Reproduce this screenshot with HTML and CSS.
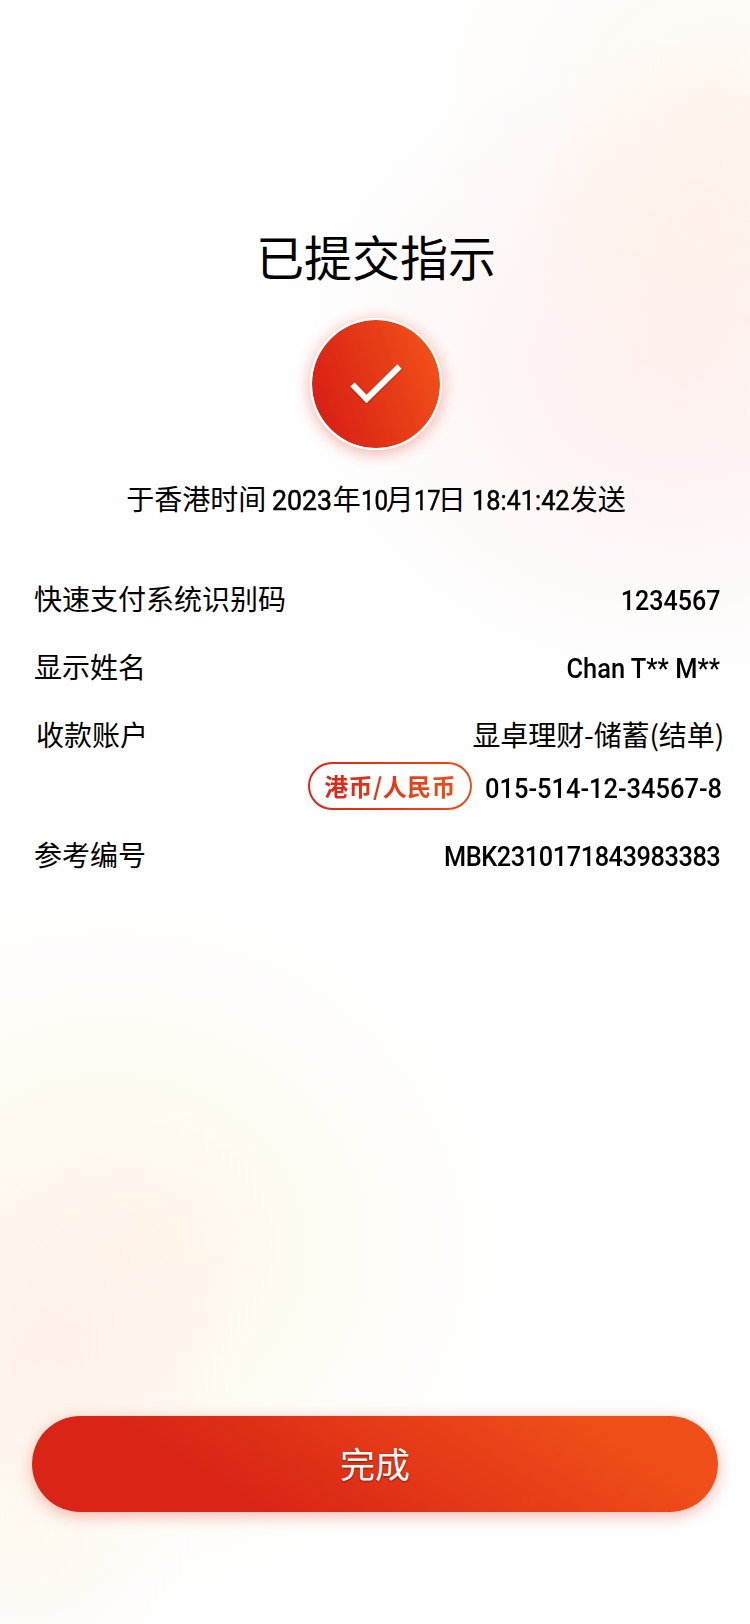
FILE: index.html
```html
<!DOCTYPE html>
<html lang="zh-CN">
<head>
<meta charset="utf-8">
<title>已提交指示</title>
<link rel="stylesheet" href="styles.css">
</head>
<body>
<main class="page">
  <h1 class="title">已提交指示</h1>
  <div class="badge">
    <svg class="check" viewBox="0 0 52 40" width="52" height="40"><path d="M2.5 20.5 16.5 35 49.5 2.5" fill="none" stroke="#fff" stroke-width="6"/></svg>
  </div>
  <p class="sent">于香港时间<span class="num year">2023</span>年<span class="num month">10</span>月<span class="num day">17</span>日<span class="num time">18:41:42</span>发送</p>
  <dl class="details">
    <div class="row"><dt>快速支付系统识别码</dt><dd class="num id">1234567</dd></div>
    <div class="row"><dt>显示姓名</dt><dd class="num name">Chan T** M**</dd></div>
    <div class="row account">
      <dt>收款账户</dt>
      <dd class="account-name">显卓理财-储蓄(结单)</dd>
    </div>
    <div class="row account-line">
      <dd class="pill"><span class="pill-text">港币/人民币</span></dd>
      <dd class="num number">015-514-12-34567-8</dd>
    </div>
    <div class="row"><dt>参考编号</dt><dd class="num ref">MBK2310171843983383</dd></div>
  </dl>
  <button class="done">完成</button>
</main>
</body>
</html>
```
FILE: styles.css
```css
* { box-sizing: border-box; }
body {
  margin: 0;
  font-family: "Noto Sans CJK SC", sans-serif;
  font-size: 28px;
  color: #000;
}
.page {
  height: 1624px;
  display: flex;
  flex-direction: column;
  align-items: center;
  overflow: hidden;
  background:
    radial-gradient(ellipse 170px 170px at 700px 220px, rgba(255, 238, 228, .6), rgba(255, 238, 228, 0)),
    radial-gradient(ellipse 380px 320px at 680px 360px, rgba(254, 238, 236, .9), rgba(254, 241, 239, .6) 50%, rgba(255, 246, 244, 0)),
    radial-gradient(ellipse 300px 260px at 720px 100px, rgba(255, 249, 242, 1), rgba(255, 251, 246, 0)),
    radial-gradient(ellipse 190px 200px at 50px 1340px, rgba(255, 239, 232, .9), rgba(255, 242, 234, 0)),
    radial-gradient(ellipse 150px 130px at 150px 1240px, rgba(255, 244, 234, .8), rgba(255, 246, 236, 0)),
    radial-gradient(ellipse 400px 360px at 110px 1250px, rgba(255, 250, 238, 1), rgba(255, 251, 241, .8) 50%, rgba(255, 253, 248, 0)),
    radial-gradient(ellipse 160px 160px at 30px 1530px, rgba(255, 247, 236, .8), rgba(255, 250, 240, 0)),
    #fefefe;
}
.title {
  margin: 219px 0 0 2px;
  font-size: 48px;
  line-height: 72px;
  font-weight: 400;
}
.badge {
  flex: none;
  width: 132px;
  height: 132px;
  margin: 27px 0 0 2px;
  border: 2px solid #fff;
  border-radius: 50%;
  background: linear-gradient(70deg, #d92015 12%, #f04e19 88%) padding-box;
  box-shadow: 0 3px 16px rgba(226, 50, 30, .38);
  display: grid;
  place-items: center;
}
.check { filter: drop-shadow(0 1px 1px rgba(100, 10, 0, .4)); }
.sent { margin: 28px 0 0 2px; line-height: 40px; white-space: nowrap; }
.num {
  font-family: Roboto, "Noto Sans CJK SC", sans-serif;
  font-weight: 500;
  font-size: 27.5px;
  white-space: nowrap;
}
.sent .num {
  display: inline-block;
  font-weight: 400;
  -webkit-text-stroke: .5px #000;
  transform-origin: 0 50%;
}
.year { width: 60.5px; margin-left: 6px; transform: scaleX(.97); }
.month { width: 25px; transform: scaleX(.88); }
.day { width: 24px; transform: scaleX(.86); }
.time { width: 98px; margin-left: 6px; transform: scaleX(.92); }
.details { width: 100%; margin: 46px 0 0; padding: 0 30px 0 34px; }
.row { height: 68px; display: flex; justify-content: space-between; line-height: 68px; }
dt { margin-top: -3px; }
dd { margin: 0; }
.row .num { transform-origin: 100% 50%; }
.id { transform: scaleX(.91); }
.name { transform: scaleX(.925); }
.account { height: 60px; padding-left: 2px; }
.account-name { margin: -3px -4px 0 0; letter-spacing: -.1px; }
.account-line { height: 60px; line-height: 48px; align-items: flex-start; justify-content: flex-end; gap: 12px; }
.pill {
  width: 164px;
  height: 48px;
  margin-top: -1px;
  border: 2px solid transparent;
  border-radius: 24px;
  background: linear-gradient(#fff, #fff) padding-box, linear-gradient(90deg, #db2416, #f04c19) border-box;
  text-align: center;
  font-size: 24px;
  line-height: 43px;
  font-weight: 700;
  letter-spacing: .4px;
}
.pill-text {
  background: linear-gradient(90deg, #db2416, #f04c19);
  -webkit-background-clip: text;
  background-clip: text;
  color: transparent;
}
.number { width: 238px; display: flex; justify-content: flex-end; transform: scaleX(.925); margin: 2px -2px 0 0; }
.ref { transform: scaleX(.92); letter-spacing: -.45px; }
.done {
  width: 686px;
  height: 96px;
  margin: auto 0 112px;
  border: 0;
  border-radius: 48px;
  background: linear-gradient(32deg, #d92416 27%, #f04e19 84%);
  box-shadow: 0 4px 16px rgba(226, 50, 30, .34);
  padding: 0 0 2px;
  font: 400 35px/94px "Noto Sans CJK SC", sans-serif;
  color: #fff;
  text-shadow: 0 1px 2px rgba(90, 0, 0, .6);
}
```
